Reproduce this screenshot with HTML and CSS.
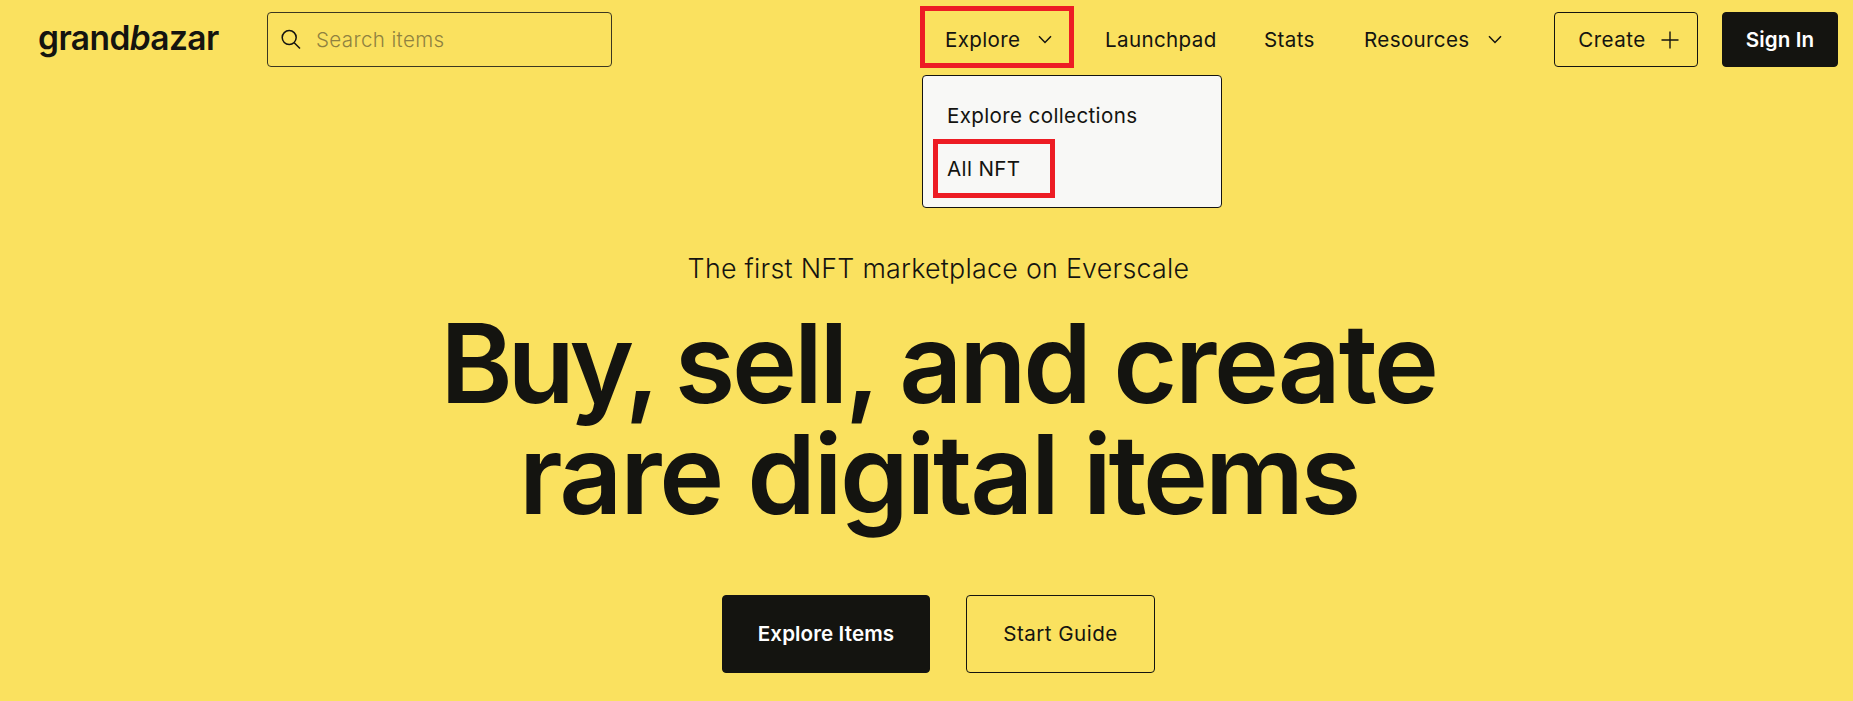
FILE: index.html
```html
<!DOCTYPE html>
<html lang="en">
<head>
<meta charset="utf-8">
<title>grandbazar</title>
<link rel="stylesheet" href="styles.css">
</head>
<body>
<header class="header">
  <a class="logo">grand<i>b</i>azar</a>
  <div class="search">
    <svg class="search-icon" viewBox="0 0 20 24" width="20" height="24"><circle cx="8.2" cy="9.6" r="7" /><path d="M13.2 14.8 19 20.5"/></svg>
    <span class="search-placeholder">Search items</span>
  </div>
  <nav class="nav">
    <div class="nav-item nav-explore">
      <span>Explore</span>
      <svg class="chevron" viewBox="0 0 14 9" width="14" height="9"><path d="M1 1.2 7 7.4 13 1.2"/></svg>
      <div class="highlight highlight-explore"></div>
      <div class="menu">
        <a class="menu-item">Explore collections</a>
        <a class="menu-item menu-item-all">All NFT<span class="highlight highlight-all"></span></a>
      </div>
    </div>
    <a class="nav-item nav-launchpad">Launchpad</a>
    <a class="nav-item nav-stats">Stats</a>
    <div class="nav-item nav-resources">
      <span>Resources</span>
      <svg class="chevron" viewBox="0 0 14 9" width="14" height="9"><path d="M1 1.2 7 7.4 13 1.2"/></svg>
    </div>
  </nav>
  <button class="button button-create"><span>Create</span>
    <svg class="plus" viewBox="0 0 18 18" width="18" height="18"><path d="M9 0.5V17.5M0.5 9H17.5"/></svg>
  </button>
  <button class="button button-dark button-signin">Sign In</button>
</header>
<main class="hero">
  <p class="tagline">The first NFT marketplace on Everscale</p>
  <h1 class="title"><span class="tight">Buy, </span>sell, and <span class="loose">create</span><br><span class="loose">rare digital </span>items</h1>
  <div class="actions">
    <button class="button button-dark button-items">Explore Items</button>
    <button class="button button-guide">Start Guide</button>
  </div>
</main>
</body>
</html>
```

FILE: styles.css
```css
* { box-sizing: border-box; }

body {
  margin: 0;
  min-height: 701px;
  overflow: hidden;
  background: #fae15f;
  color: #141410;
  font-family: Inter, "Liberation Sans", sans-serif;
  font-size: 20.6px;
}

svg { fill: none; stroke: #141410; flex: none; }

.header {
  display: flex;
  height: 79px;
  padding: 12px 15px 12px 38px;
}

.logo {
  width: 229px;
  line-height: 53px;
  font-size: 33.5px;
  font-weight: 560;
  letter-spacing: -0.55px;
}

.search {
  display: flex;
  align-items: center;
  width: 345px;
  height: 55px;
  padding-left: 13px;
  border: 1px solid #3b3720;
  border-radius: 4px;
}

.search-icon { stroke-width: 1.5; }

.search-placeholder {
  margin-left: 15px;
  font-weight: 300;
  color: #8f8140;
  letter-spacing: 0.35px;
}

.nav { display: flex; margin-left: 310px; height: 55px; width: 632px; }

.nav-item {
  position: relative;
  display: flex;
  align-items: center;
  letter-spacing: 0.35px;
  padding-left: 23px;
}

.nav-explore { width: 160px; }
.nav-launchpad { width: 159px; }
.nav-stats { width: 100px; }
.nav-resources { width: 160px; }
.chevron { margin-left: 18px; stroke-width: 1.5; }

.highlight { position: absolute; border: 5px solid #ed1c24; }
.highlight-explore { left: -2px; top: -6px; width: 154px; height: 62px; }
.highlight-all { left: -14px; top: -10px; width: 122px; height: 59px; }

.menu {
  position: absolute;
  left: 0;
  top: 63px;
  width: 300px;
  height: 133px;
  padding: 20px 24px;
  border: 1px solid #141410;
  border-radius: 4px;
  background: #f8f8f6;
}

.menu-item { position: relative; display: block; height: 53px; line-height: 40px; }

.button {
  display: flex;
  align-items: center;
  justify-content: center;
  height: 55px;
  padding: 0;
  border: 1px solid #141410;
  border-radius: 4px;
  background: none;
  color: #141410;
  font: inherit;
  letter-spacing: 0.45px;
}

.button-dark { background: #141410; color: #fff; font-weight: 600; letter-spacing: 0.1px; }
.button-create { width: 144px; padding-left: 5px; }
.plus { margin-left: 15px; stroke-width: 1.4; }
.button-signin { width: 116px; margin-left: 24px; }

.hero {
  display: flex;
  flex-direction: column;
  align-items: center;
  padding: 169px 0 0 24px;
}

.tagline { margin: 0; font-size: 26.8px; line-height: 40px; font-weight: 300; letter-spacing: 0.27px; }

.title {
  margin: 20px 0 0;
  text-align: center;
  font-size: 110px;
  line-height: 111px;
  font-weight: 560;
  letter-spacing: -3.2px;
  white-space: nowrap;
}
.tight { letter-spacing: -5.2px; }
.loose { letter-spacing: -2.3px; }

.actions { display: flex; gap: 36px; margin-top: 65px; }
.actions .button { height: 78px; padding-bottom: 2px; }
.button-items { width: 208px; }
.button-guide { width: 189px; }
```
